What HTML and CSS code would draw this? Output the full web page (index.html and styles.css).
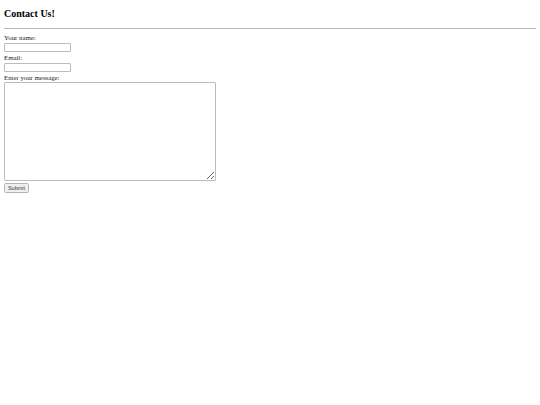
FILE: index.html
```html
<!DOCTYPE html>
<html>
<head>
<meta charset="utf-8">
<title>Contact Us</title>
<link rel="stylesheet" href="styles.css">
</head>
<body>
<div class="page">
  <h2 class="title">Contact Us!</h2>
  <hr class="rule">
  <form class="form">
    <label class="label" for="name">Your name:</label>
    <input class="field" type="text" id="name">
    <label class="label" for="email">Email:</label>
    <input class="field" type="text" id="email">
    <label class="label label-last" for="msg">Enter your message:</label>
    <textarea class="message" id="msg"></textarea>
    <button class="submit" type="button">Submit</button>
  </form>
</div>
</body>
</html>
```

FILE: styles.css
```css
html, body {
  margin: 0;
  padding: 0;
  background: #ffffff;
}
.page {
  display: flex;
  flex-direction: column;
  padding: 0 4px;
  font-family: "Liberation Serif", "Times New Roman", serif;
  color: #000;
}
.title {
  margin: 0;
  padding-top: 8px;
  font-size: 10px;
  line-height: 12px;
  font-weight: bold;
}
.rule {
  margin: 8px 0 0 0;
  border: 0;
  border-top: 1px solid #b8b8b8;
  height: 0;
}
.form {
  display: flex;
  flex-direction: column;
  align-items: flex-start;
  padding-top: 4px;
}
.label {
  display: block;
  font-size: 6.8px;
  line-height: 9px;
  height: 9px;
  margin-top: 1px;
  color: #222;
}
.label:first-child {
  margin-top: 0;
}
.field {
  box-sizing: border-box;
  width: 67px;
  height: 9px;
  margin: 1px 0 0 0;
  padding: 0;
  border: 1px solid #bcbcbc;
  border-radius: 1px;
  background: #fff;
}
.message {
  box-sizing: border-box;
  width: 212px;
  height: 99px;
  margin: 0;
  padding: 0;
  border: 1px solid #bcbcbc;
  border-radius: 1px;
  background: #fff;
}
.submit {
  box-sizing: border-box;
  width: 25px;
  height: 10px;
  margin-top: 2px;
  padding: 0;
  font-family: "Liberation Sans", Arial, sans-serif;
  font-size: 5.5px;
  line-height: 8px;
  color: #333;
  background: #f0f0f0;
  border: 1px solid #b4b4b4;
  border-radius: 1.5px;
}
```
